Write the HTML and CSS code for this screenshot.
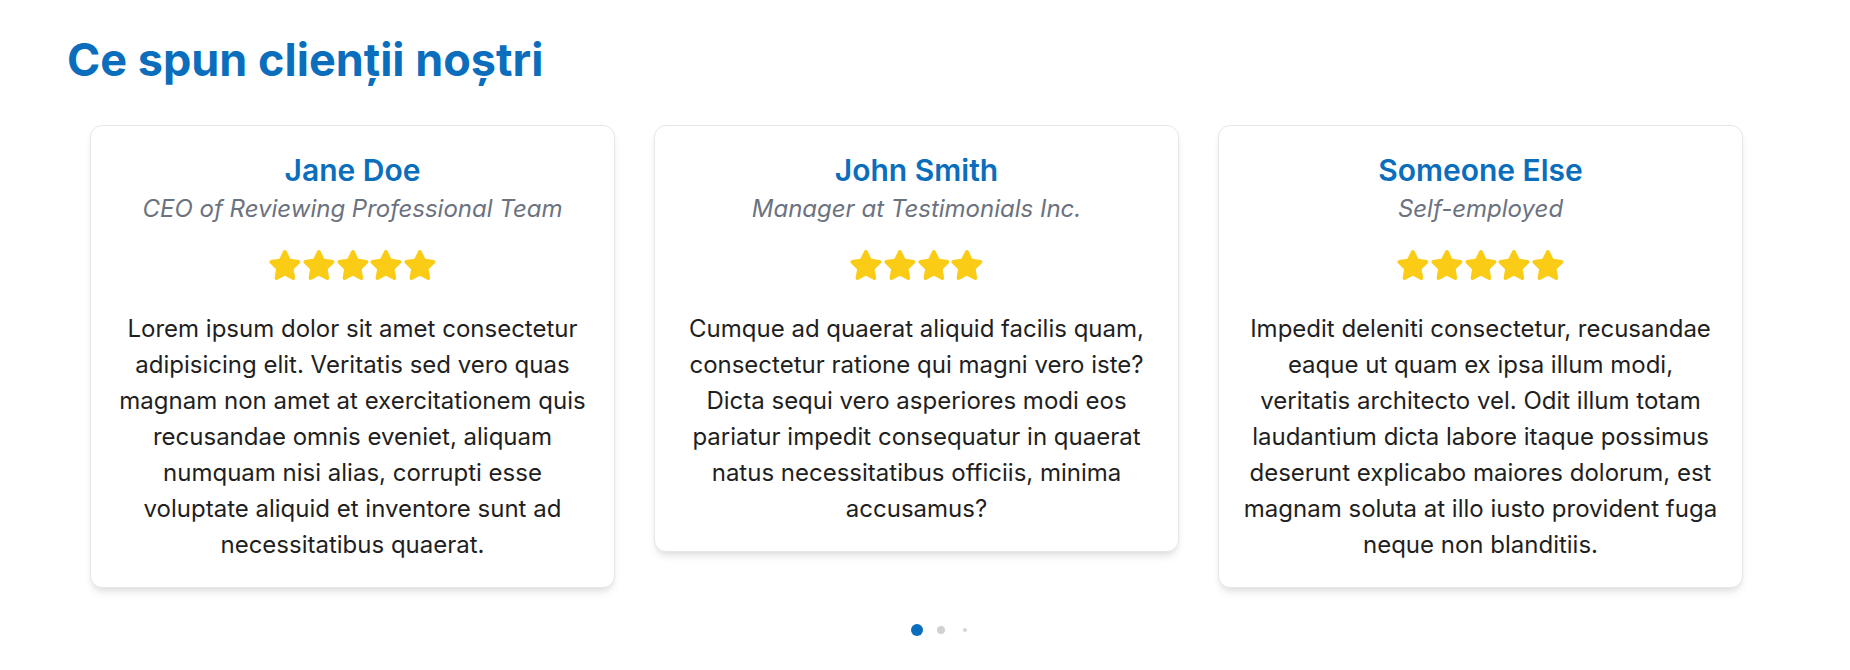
FILE: index.html
```html
<!DOCTYPE html>
<html lang="ro">
<head>
<meta charset="utf-8">
<title>Ce spun clienții noștri</title>
<link rel="stylesheet" href="styles.css">
</head>
<body>
<section class="testimonials">
  <h2 class="title">Ce spun clienții noștri</h2>
  <div class="cards">
    <article class="card">
      <h3 class="name">Jane Doe</h3>
      <p class="role">CEO of Reviewing Professional Team</p>
      <div class="stars">
        <svg class="star" viewBox="0 0 576 512"><path d="M316.9 18C311.6 7 300.4 0 288.1 0s-23.4 7-28.8 18L195 150.3 51.4 171.5c-12 1.8-22 10.2-25.7 21.7s-.7 24.2 7.9 32.7L137.8 329 113.2 474.7c-2 12 3 24.2 12.9 31.3s23 8 33.8 2.3l128.3-68.5 128.3 68.5c10.8 5.7 23.9 4.9 33.8-2.3s14.9-19.3 12.9-31.3L438.5 329 542.7 225.9c8.6-8.5 11.7-21.2 7.9-32.7s-13.7-19.9-25.7-21.7L381.2 150.3 316.9 18z"/></svg>
        <svg class="star" viewBox="0 0 576 512"><path d="M316.9 18C311.6 7 300.4 0 288.1 0s-23.4 7-28.8 18L195 150.3 51.4 171.5c-12 1.8-22 10.2-25.7 21.7s-.7 24.2 7.9 32.7L137.8 329 113.2 474.7c-2 12 3 24.2 12.9 31.3s23 8 33.8 2.3l128.3-68.5 128.3 68.5c10.8 5.7 23.9 4.9 33.8-2.3s14.9-19.3 12.9-31.3L438.5 329 542.7 225.9c8.6-8.5 11.7-21.2 7.9-32.7s-13.7-19.9-25.7-21.7L381.2 150.3 316.9 18z"/></svg>
        <svg class="star" viewBox="0 0 576 512"><path d="M316.9 18C311.6 7 300.4 0 288.1 0s-23.4 7-28.8 18L195 150.3 51.4 171.5c-12 1.8-22 10.2-25.7 21.7s-.7 24.2 7.9 32.7L137.8 329 113.2 474.7c-2 12 3 24.2 12.9 31.3s23 8 33.8 2.3l128.3-68.5 128.3 68.5c10.8 5.7 23.9 4.9 33.8-2.3s14.9-19.3 12.9-31.3L438.5 329 542.7 225.9c8.6-8.5 11.7-21.2 7.9-32.7s-13.7-19.9-25.7-21.7L381.2 150.3 316.9 18z"/></svg>
        <svg class="star" viewBox="0 0 576 512"><path d="M316.9 18C311.6 7 300.4 0 288.1 0s-23.4 7-28.8 18L195 150.3 51.4 171.5c-12 1.8-22 10.2-25.7 21.7s-.7 24.2 7.9 32.7L137.8 329 113.2 474.7c-2 12 3 24.2 12.9 31.3s23 8 33.8 2.3l128.3-68.5 128.3 68.5c10.8 5.7 23.9 4.9 33.8-2.3s14.9-19.3 12.9-31.3L438.5 329 542.7 225.9c8.6-8.5 11.7-21.2 7.9-32.7s-13.7-19.9-25.7-21.7L381.2 150.3 316.9 18z"/></svg>
        <svg class="star" viewBox="0 0 576 512"><path d="M316.9 18C311.6 7 300.4 0 288.1 0s-23.4 7-28.8 18L195 150.3 51.4 171.5c-12 1.8-22 10.2-25.7 21.7s-.7 24.2 7.9 32.7L137.8 329 113.2 474.7c-2 12 3 24.2 12.9 31.3s23 8 33.8 2.3l128.3-68.5 128.3 68.5c10.8 5.7 23.9 4.9 33.8-2.3s14.9-19.3 12.9-31.3L438.5 329 542.7 225.9c8.6-8.5 11.7-21.2 7.9-32.7s-13.7-19.9-25.7-21.7L381.2 150.3 316.9 18z"/></svg>
      </div>
      <p class="text">Lorem ipsum dolor sit amet consectetur adipisicing elit. Veritatis sed vero quas magnam non amet at exercitationem quis recusandae omnis eveniet, aliquam numquam nisi alias, corrupti esse voluptate aliquid et inventore sunt ad necessitatibus quaerat.</p>
    </article>
    <article class="card">
      <h3 class="name">John Smith</h3>
      <p class="role">Manager at Testimonials Inc.</p>
      <div class="stars">
        <svg class="star" viewBox="0 0 576 512"><path d="M316.9 18C311.6 7 300.4 0 288.1 0s-23.4 7-28.8 18L195 150.3 51.4 171.5c-12 1.8-22 10.2-25.7 21.7s-.7 24.2 7.9 32.7L137.8 329 113.2 474.7c-2 12 3 24.2 12.9 31.3s23 8 33.8 2.3l128.3-68.5 128.3 68.5c10.8 5.7 23.9 4.9 33.8-2.3s14.9-19.3 12.9-31.3L438.5 329 542.7 225.9c8.6-8.5 11.7-21.2 7.9-32.7s-13.7-19.9-25.7-21.7L381.2 150.3 316.9 18z"/></svg>
        <svg class="star" viewBox="0 0 576 512"><path d="M316.9 18C311.6 7 300.4 0 288.1 0s-23.4 7-28.8 18L195 150.3 51.4 171.5c-12 1.8-22 10.2-25.7 21.7s-.7 24.2 7.9 32.7L137.8 329 113.2 474.7c-2 12 3 24.2 12.9 31.3s23 8 33.8 2.3l128.3-68.5 128.3 68.5c10.8 5.7 23.9 4.9 33.8-2.3s14.9-19.3 12.9-31.3L438.5 329 542.7 225.9c8.6-8.5 11.7-21.2 7.9-32.7s-13.7-19.9-25.7-21.7L381.2 150.3 316.9 18z"/></svg>
        <svg class="star" viewBox="0 0 576 512"><path d="M316.9 18C311.6 7 300.4 0 288.1 0s-23.4 7-28.8 18L195 150.3 51.4 171.5c-12 1.8-22 10.2-25.7 21.7s-.7 24.2 7.9 32.7L137.8 329 113.2 474.7c-2 12 3 24.2 12.9 31.3s23 8 33.8 2.3l128.3-68.5 128.3 68.5c10.8 5.7 23.9 4.9 33.8-2.3s14.9-19.3 12.9-31.3L438.5 329 542.7 225.9c8.6-8.5 11.7-21.2 7.9-32.7s-13.7-19.9-25.7-21.7L381.2 150.3 316.9 18z"/></svg>
        <svg class="star" viewBox="0 0 576 512"><path d="M316.9 18C311.6 7 300.4 0 288.1 0s-23.4 7-28.8 18L195 150.3 51.4 171.5c-12 1.8-22 10.2-25.7 21.7s-.7 24.2 7.9 32.7L137.8 329 113.2 474.7c-2 12 3 24.2 12.9 31.3s23 8 33.8 2.3l128.3-68.5 128.3 68.5c10.8 5.7 23.9 4.9 33.8-2.3s14.9-19.3 12.9-31.3L438.5 329 542.7 225.9c8.6-8.5 11.7-21.2 7.9-32.7s-13.7-19.9-25.7-21.7L381.2 150.3 316.9 18z"/></svg>
      </div>
      <p class="text">Cumque ad quaerat aliquid facilis quam, consectetur ratione qui magni vero iste? Dicta sequi vero asperiores modi eos pariatur impedit consequatur in quaerat natus necessitatibus officiis, minima accusamus?</p>
    </article>
    <article class="card">
      <h3 class="name">Someone Else</h3>
      <p class="role">Self-employed</p>
      <div class="stars">
        <svg class="star" viewBox="0 0 576 512"><path d="M316.9 18C311.6 7 300.4 0 288.1 0s-23.4 7-28.8 18L195 150.3 51.4 171.5c-12 1.8-22 10.2-25.7 21.7s-.7 24.2 7.9 32.7L137.8 329 113.2 474.7c-2 12 3 24.2 12.9 31.3s23 8 33.8 2.3l128.3-68.5 128.3 68.5c10.8 5.7 23.9 4.9 33.8-2.3s14.9-19.3 12.9-31.3L438.5 329 542.7 225.9c8.6-8.5 11.7-21.2 7.9-32.7s-13.7-19.9-25.7-21.7L381.2 150.3 316.9 18z"/></svg>
        <svg class="star" viewBox="0 0 576 512"><path d="M316.9 18C311.6 7 300.4 0 288.1 0s-23.4 7-28.8 18L195 150.3 51.4 171.5c-12 1.8-22 10.2-25.7 21.7s-.7 24.2 7.9 32.7L137.8 329 113.2 474.7c-2 12 3 24.2 12.9 31.3s23 8 33.8 2.3l128.3-68.5 128.3 68.5c10.8 5.7 23.9 4.9 33.8-2.3s14.9-19.3 12.9-31.3L438.5 329 542.7 225.9c8.6-8.5 11.7-21.2 7.9-32.7s-13.7-19.9-25.7-21.7L381.2 150.3 316.9 18z"/></svg>
        <svg class="star" viewBox="0 0 576 512"><path d="M316.9 18C311.6 7 300.4 0 288.1 0s-23.4 7-28.8 18L195 150.3 51.4 171.5c-12 1.8-22 10.2-25.7 21.7s-.7 24.2 7.9 32.7L137.8 329 113.2 474.7c-2 12 3 24.2 12.9 31.3s23 8 33.8 2.3l128.3-68.5 128.3 68.5c10.8 5.7 23.9 4.9 33.8-2.3s14.9-19.3 12.9-31.3L438.5 329 542.7 225.9c8.6-8.5 11.7-21.2 7.9-32.7s-13.7-19.9-25.7-21.7L381.2 150.3 316.9 18z"/></svg>
        <svg class="star" viewBox="0 0 576 512"><path d="M316.9 18C311.6 7 300.4 0 288.1 0s-23.4 7-28.8 18L195 150.3 51.4 171.5c-12 1.8-22 10.2-25.7 21.7s-.7 24.2 7.9 32.7L137.8 329 113.2 474.7c-2 12 3 24.2 12.9 31.3s23 8 33.8 2.3l128.3-68.5 128.3 68.5c10.8 5.7 23.9 4.9 33.8-2.3s14.9-19.3 12.9-31.3L438.5 329 542.7 225.9c8.6-8.5 11.7-21.2 7.9-32.7s-13.7-19.9-25.7-21.7L381.2 150.3 316.9 18z"/></svg>
        <svg class="star" viewBox="0 0 576 512"><path d="M316.9 18C311.6 7 300.4 0 288.1 0s-23.4 7-28.8 18L195 150.3 51.4 171.5c-12 1.8-22 10.2-25.7 21.7s-.7 24.2 7.9 32.7L137.8 329 113.2 474.7c-2 12 3 24.2 12.9 31.3s23 8 33.8 2.3l128.3-68.5 128.3 68.5c10.8 5.7 23.9 4.9 33.8-2.3s14.9-19.3 12.9-31.3L438.5 329 542.7 225.9c8.6-8.5 11.7-21.2 7.9-32.7s-13.7-19.9-25.7-21.7L381.2 150.3 316.9 18z"/></svg>
      </div>
      <p class="text">Impedit deleniti consectetur, recusandae eaque ut quam ex ipsa illum modi, veritatis architecto vel. Odit illum totam laudantium dicta labore itaque possimus deserunt explicabo maiores dolorum, est magnam soluta at illo iusto provident fuga neque non blanditiis.</p>
    </article>
  </div>
  <div class="dots">
    <span class="slot"><span class="dot dot-active"></span></span>
    <span class="slot"><span class="dot dot-next"></span></span>
    <span class="slot"><span class="dot dot-far"></span></span>
  </div>
</section>
</body>
</html>
```

FILE: styles.css
```css
* { box-sizing: border-box; }

html, body {
  margin: 0;
  padding: 0;
  background: #ffffff;
}

body {
  font-family: Inter, "Noto Sans", "Liberation Sans", sans-serif;
  color: #1f1f1f;
}

.testimonials {
  padding: 33px 0 0 0;
}

.title {
  margin: 0 0 0 67px;
  font-size: 45px;
  line-height: 54px;
  font-weight: 700;
  color: #0a6ebd;
}

.cards {
  display: flex;
  align-items: flex-start;
  gap: 39px;
  padding-left: 90px;
  margin-top: 38px;
}

.card {
  width: 525px;
  flex: 0 0 525px;
  background: #fff;
  border: 1px solid #e5e7eb;
  border-radius: 12px;
  box-shadow: 0 6px 9px -2px rgba(0, 0, 0, 0.10), 0 3px 6px -3px rgba(0, 0, 0, 0.08);
  padding: 23px 24px 24px;
  text-align: center;
}

.name {
  margin: 0;
  font-size: 30px;
  line-height: 42px;
  font-weight: 600;
  color: #0a6ebd;
}

.role {
  margin: 0;
  font-size: 24px;
  line-height: 36px;
  font-style: italic;
  color: #6b7280;
}

.stars {
  display: flex;
  justify-content: center;
  margin-top: 23px;
  height: 30px;
}

.star {
  width: 33.75px;
  height: 30px;
  fill: #facc15;
  display: block;
}

.text {
  margin: 31px 0 0;
  font-size: 24px;
  line-height: 36px;
  color: #1f1f1f;
}

.dots {
  display: flex;
  justify-content: center;
  align-items: center;
  padding-left: 32px;
  margin-top: 36px;
  height: 12px;
}

.slot {
  width: 24px;
  display: flex;
  justify-content: center;
  align-items: center;
}

.dot {
  display: block;
  border-radius: 50%;
  background: #d1d1d1;
}

.dot-active {
  width: 12px;
  height: 12px;
  background: #0a6ebd;
}

.dot-next {
  width: 8px;
  height: 8px;
}

.dot-far {
  width: 4px;
  height: 4px;
  background: #d6d6d6;
}
```
